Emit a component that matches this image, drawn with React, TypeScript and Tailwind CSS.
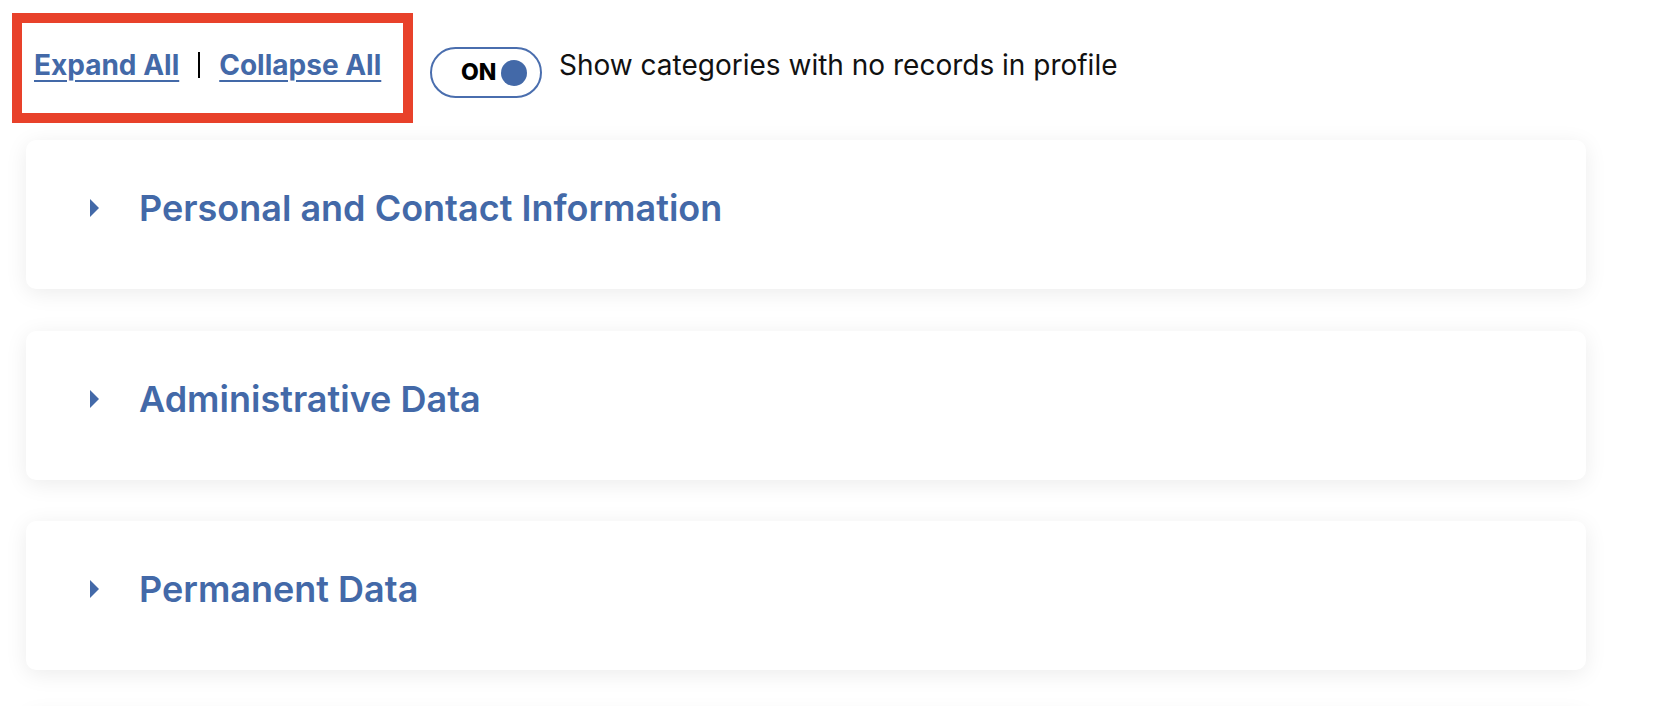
import { useState } from "react";

const categories = [
  "Personal and Contact Information",
  "Administrative Data",
  "Permanent Data",
  "Course Data",
];

const Caret = () => (
  <svg width="9" height="18" viewBox="0 0 9 18" className="shrink-0">
    <polygon points="0,0 9,9 0,18" fill="#4369a8" />
  </svg>
);

const App = () => {
  const [showEmpty, setShowEmpty] = useState(true);

  return (
    <div className="min-h-screen bg-white font-['Inter',sans-serif] overflow-hidden">
      {/* Toolbar */}
      <div className="flex items-start pt-[13px] pl-[12px]">
        <div className="border-[10px] border-[#e8412a] w-[401px] h-[110px] flex items-center pl-[12px] pb-[7px]">
          <a href="#" className="text-[28px] font-bold leading-[34px] text-[#4369a8] underline decoration-2 underline-offset-[5px]">
            Expand All
          </a>
          <span className="w-[2px] h-[26px] bg-black mx-[19px]" />
          <a href="#" className="text-[28px] font-bold leading-[34px] text-[#4369a8] underline decoration-2 underline-offset-[5px]">
            Collapse All
          </a>
        </div>

        <button
          onClick={() => setShowEmpty(!showEmpty)}
          className="ml-[17px] mt-[34px] w-[112px] h-[51px] rounded-full border-2 border-[#4a6eae] bg-white flex items-center pl-[29px] gap-[5px]"
        >
          <span className="text-[23px] font-extrabold leading-none text-black">{showEmpty ? "ON" : "OFF"}</span>
          <span className="w-[26px] h-[26px] rounded-full bg-[#4369a8]" />
        </button>

        <p className="ml-[17px] mt-[36px] text-[28px] leading-[32px] text-[#111]">
          Show categories with no records in profile
        </p>
      </div>

      {/* Categories */}
      <div className="flex flex-col gap-[41.5px] pl-[26px] pt-[17px] pb-10">
        {categories.map((c) => (
          <div
            key={c}
            className="w-[1560px] h-[149px] bg-white rounded-[10px] shadow-[0_4px_22px_rgba(0,0,0,0.08)] flex items-start pt-[48px] pl-[64px]"
          >
            <div className="flex items-center h-[40px]">
              <Caret />
              <h2 className="ml-[40px] text-[36px] font-semibold leading-[40px] text-[#4369a8]">{c}</h2>
            </div>
          </div>
        ))}
      </div>
    </div>
  );
};

export default App;
